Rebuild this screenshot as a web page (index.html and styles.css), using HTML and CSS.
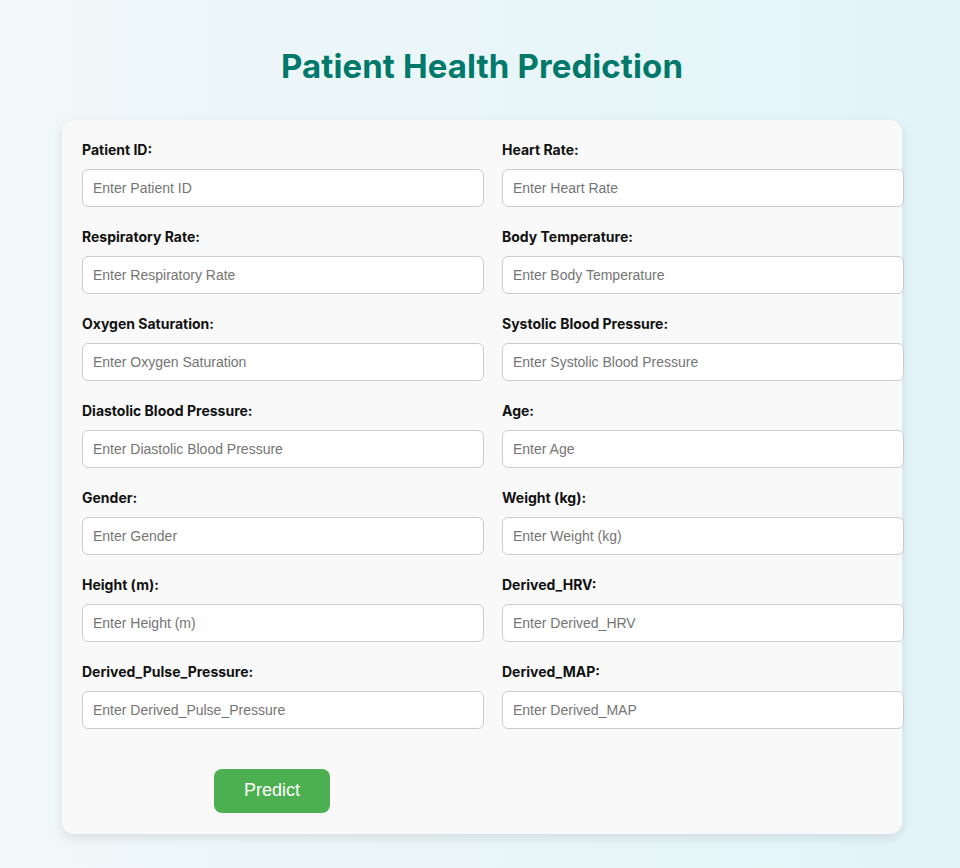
FILE: index.html
```html
<!DOCTYPE html>
<html lang="en">
<head>
<meta charset="UTF-8">
<title>Patient Health Prediction</title>
<link rel="stylesheet" href="styles.css">
</head>
<body>
<div class="page">
  <h1 class="title">Patient Health Prediction</h1>
  <form class="card">
    <div class="group"><label>Patient ID:</label><input type="text" placeholder="Enter Patient ID"></div>
    <div class="group"><label>Heart Rate:</label><input type="text" placeholder="Enter Heart Rate"></div>
    <div class="group"><label>Respiratory Rate:</label><input type="text" placeholder="Enter Respiratory Rate"></div>
    <div class="group"><label>Body Temperature:</label><input type="text" placeholder="Enter Body Temperature"></div>
    <div class="group"><label>Oxygen Saturation:</label><input type="text" placeholder="Enter Oxygen Saturation"></div>
    <div class="group"><label>Systolic Blood Pressure:</label><input type="text" placeholder="Enter Systolic Blood Pressure"></div>
    <div class="group"><label>Diastolic Blood Pressure:</label><input type="text" placeholder="Enter Diastolic Blood Pressure"></div>
    <div class="group"><label>Age:</label><input type="text" placeholder="Enter Age"></div>
    <div class="group"><label>Gender:</label><input type="text" placeholder="Enter Gender"></div>
    <div class="group"><label>Weight (kg):</label><input type="text" placeholder="Enter Weight (kg)"></div>
    <div class="group"><label>Height (m):</label><input type="text" placeholder="Enter Height (m)"></div>
    <div class="group"><label>Derived_HRV:</label><input type="text" placeholder="Enter Derived_HRV"></div>
    <div class="group"><label>Derived_Pulse_Pressure:</label><input type="text" placeholder="Enter Derived_Pulse_Pressure"></div>
    <div class="group"><label>Derived_MAP:</label><input type="text" placeholder="Enter Derived_MAP"></div>
    <div class="actions"><button type="button" class="btn">Predict</button></div>
  </form>
</div>
</body>
</html>
```
FILE: styles.css
```css
html, body {
  margin: 0;
  padding: 0;
}
body {
  min-height: 868px;
  background: linear-gradient(90deg, #f1f8fa 0%, #e2f4f8 100%);
  font-family: "Inter", "Liberation Sans", sans-serif;
}
.page {
  width: 840px;
  margin: 0 auto;
  padding: 41px 0 20px;
  position: relative;
  left: 2px;
}
.title {
  margin: 0 0 31px;
  height: 48px;
  line-height: 50px;
  text-align: center;
  font-size: 33px;
  font-weight: 700;
  color: #00796b;
  letter-spacing: 0.1px;
}
.card {
  background: #f9f9f9;
  border-radius: 12px;
  box-shadow: 0 4px 12px rgba(0, 0, 0, 0.1);
  padding: 20px 20px 21px;
  display: flex;
  flex-wrap: wrap;
  justify-content: space-between;
}
.card::after {
  content: "";
  width: 380px;
}
.group {
  width: 380px;
  margin-bottom: 20px;
}
.group label {
  display: block;
  height: 21px;
  line-height: 20px;
  margin-bottom: 8px;
  font-family: "Inter", sans-serif;
  font-weight: 700;
  font-size: 14px;
  color: #111;
}
.group input {
  display: block;
  width: 380px;
  height: 16px;
  padding: 10px;
  border: 1px solid #ccc;
  border-radius: 6px;
  background: #fff;
  font-family: "Liberation Sans", Arial, sans-serif;
  font-size: 14px;
  color: #333;
  outline: none;
}
.group input::placeholder {
  color: #757575;
}
.actions {
  width: 380px;
  display: flex;
  justify-content: center;
}
.btn {
  margin-top: 20px;
  width: 116px;
  height: 44px;
  padding: 0 0 2px;
  border: none;
  border-radius: 8px;
  background: #4caf50;
  color: #fff;
  font-family: "Liberation Sans", Arial, sans-serif;
  font-size: 18px;
  cursor: pointer;
}
```
